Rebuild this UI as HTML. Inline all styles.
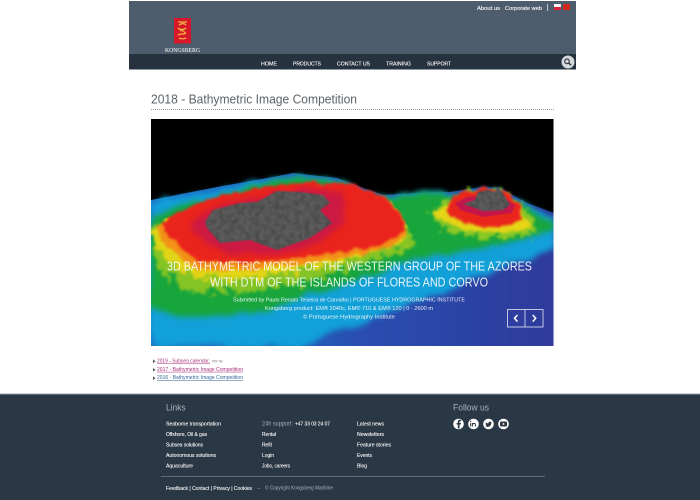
<!DOCTYPE html>
<html><head><meta charset="utf-8">
<style>
html,body{margin:0;padding:0;background:#fff;width:700px;height:500px;overflow:hidden}
svg{display:block;position:absolute;left:0;top:0}
text{font-family:"Liberation Sans",sans-serif}
</style></head><body>
<svg width="700" height="500" viewBox="0 0 700 500" xmlns="http://www.w3.org/2000/svg">
<defs>
<clipPath id="ic"><rect x="151" y="119" width="402.500" height="227"/></clipPath>
<clipPath id="yc"><polygon points="151,224 183,212 217,199 267,190 310,184 350,186 390,198 430,262 300,310 151,310"/></clipPath>
<filter id="b" x="-5%" y="-5%" width="110%" height="110%"><feGaussianBlur stdDeviation="0.35"/></filter>
<filter id="rough" x="-10%" y="-10%" width="120%" height="120%" color-interpolation-filters="sRGB">
<feTurbulence type="fractalNoise" baseFrequency="0.1" numOctaves="3" seed="4"/>
<feDisplacementMap in="SourceGraphic" scale="8" xChannelSelector="R" yChannelSelector="G"/>
<feGaussianBlur stdDeviation="1.2"/></filter>
<filter id="spk" x="-10%" y="-10%" width="120%" height="120%" color-interpolation-filters="sRGB">
<feTurbulence type="fractalNoise" baseFrequency="0.14" numOctaves="3" seed="11"/>
<feDisplacementMap in="SourceGraphic" scale="22" xChannelSelector="R" yChannelSelector="G"/>
<feGaussianBlur stdDeviation="1.3"/></filter>
<filter id="soft" x="-10%" y="-10%" width="120%" height="120%" color-interpolation-filters="sRGB">
<feTurbulence type="fractalNoise" baseFrequency="0.05" numOctaves="2" seed="9"/>
<feDisplacementMap in="SourceGraphic" scale="12" xChannelSelector="R" yChannelSelector="G"/>
<feGaussianBlur stdDeviation="3"/></filter>
<filter id="rock" x="-5%" y="-5%" width="110%" height="110%" color-interpolation-filters="sRGB">
<feTurbulence type="fractalNoise" baseFrequency="0.2" numOctaves="3" seed="3" result="n"/>
<feColorMatrix in="n" type="matrix" values="0 0 0 0 0.22 0 0 0 0 0.22 0 0 0 0 0.22 0 0 0 1.2 -0.42" result="d"/>
<feComposite in="d" in2="SourceAlpha" operator="in" result="d2"/>
<feMerge result="m"><feMergeNode in="SourceGraphic"/><feMergeNode in="d2"/></feMerge>
<feGaussianBlur in="m" stdDeviation="0.6"/></filter>
<linearGradient id="blue" x1="0" x2="1" y1="0" y2="0"><stop offset="0" stop-color="#1a78ca"/><stop offset="0.55" stop-color="#2a4cb0"/><stop offset="1" stop-color="#2e3a9a"/></linearGradient>
</defs>

<!-- header -->
<rect x="129" y="1" width="447" height="53" fill="#4e5d6d"/>
<rect x="129" y="54" width="447" height="15.500" fill="#26333f"/>
<rect x="174" y="18" width="17" height="25.500" fill="#d7182a"/>
<g fill="none" stroke="#f2b544" stroke-width="1.300" filter="url(#b)"><path d="M178 22h9M179 25c3-2 5-2 7 0M178 28c2 2 6 2 8 0M180 31c2-1 4 0 5 2M178 35c3-2 6 0 8-2M179 38c2 1 5 1 7 0"/></g>
<g filter="url(#b)">
<text x="165" y="52" font-size="6" fill="#fff" textLength="35" lengthAdjust="spacingAndGlyphs" style="font-family:'Liberation Serif',serif">KONGSBERG</text>
<g fill="#fff" stroke="#fff" stroke-width="0.100">
<text x="477" y="10" font-size="5.500" textLength="23" lengthAdjust="spacingAndGlyphs">About us</text>
<text x="505" y="10" font-size="5.500" textLength="37" lengthAdjust="spacingAndGlyphs">Corporate web</text>
<g font-size="5.500">
<text x="261" y="65.500" textLength="16" lengthAdjust="spacingAndGlyphs">HOME</text>
<text x="293" y="65.500" textLength="28" lengthAdjust="spacingAndGlyphs">PRODUCTS</text>
<text x="337" y="65.500" textLength="33" lengthAdjust="spacingAndGlyphs">CONTACT US</text>
<text x="386" y="65.500" textLength="25" lengthAdjust="spacingAndGlyphs">TRAINING</text>
<text x="427" y="65.500" textLength="24" lengthAdjust="spacingAndGlyphs">SUPPORT</text>
</g>
</g>
<rect x="547" y="4" width="0.800" height="7" fill="#dfe3e6"/>
<rect x="554" y="4" width="7" height="3" fill="#f4f4f4"/><rect x="554" y="7" width="7" height="3" fill="#d8203a"/>
<rect x="563" y="4" width="7" height="6" fill="#cf2a1c"/>
<circle cx="568" cy="62" r="6.500" fill="#d5d9dc"/>
<circle cx="567" cy="61.300" r="2.300" fill="none" stroke="#333d47" stroke-width="1.200"/>
<path d="M568.800 63l2.200 2.200" stroke="#333d47" stroke-width="1.500"/>
<text x="151" y="103.500" font-size="13" fill="#5c6369" textLength="206" lengthAdjust="spacingAndGlyphs">2018 - Bathymetric Image Competition</text>
</g>
<line x1="151" x2="554" y1="109.500" y2="109.500" stroke="#999" stroke-width="1" stroke-dasharray="1 1"/>

<!-- image -->
<g clip-path="url(#ic)">
<rect x="151" y="119" width="403" height="227" fill="#000"/>
<polygon points="151,200 217,187 273,177 293,173 337,178 363,188 383,195 417,193 450,192 483,187 500,188 527,203 554,213 554,346 151,346" fill="url(#blue)" filter="url(#b)"/>
<polygon points="151,202 217,189 273,179 293,175 337,180 363,190 383,197 417,195 450,194 483,189 500,190 527,205 554,218 554,248 483,275 417,302 350,328 300,346 151,346" fill="#12a0d8" filter="url(#soft)"/>
<polygon points="151,216 200,202 270,182 293,176 340,182 365,192 383,198 417,196 450,196 483,192 500,193 530,210 554,224 554,232 483,248 417,258 350,282 300,298 250,315 170,316 151,306" fill="#17a53c" filter="url(#soft)"/>
<g clip-path="url(#yc)">
<polygon points="151,225 170,220 200,208 250,196 300,190 350,190 394,205 408,225 418,245 350,268 300,284 250,292 190,292 160,270 151,255" fill="#84c424" filter="url(#spk)"/>
<polygon points="151,232 172,220 205,206 267,194 310,188 350,190 390,204 402,222 408,240 350,258 300,270 250,278 195,278 165,260 151,245" fill="#e2d416" filter="url(#spk)"/>
</g>
<polygon points="157,226 183,214 217,200 267,191 310,185 350,187 386,199 400,214 408,236 383,249 350,257 300,264 250,270 198,270 176,254 160,240" fill="#f39018" filter="url(#rough)"/>
<polygon points="428,214 443,202 470,190 503,192 525,207 538,232 510,238 467,236 440,226" fill="#8cc824" filter="url(#spk)"/>
<polygon points="434,214 447,204 470,192 503,194 521,208 532,228 510,232 467,231 444,222" fill="#e6d416" filter="url(#rough)"/>
<polygon points="161,222 184,209 217,196 267,187 310,182 350,184 383,195 399,212 406,230 383,243 350,251 300,258 250,263 200,262 181,247 164,234" fill="#ea241c" filter="url(#rough)"/>
<polygon points="446,205 460,192 483,188 503,191 520,205 524,219 500,228 470,224 450,216" fill="#ea261c" filter="url(#rough)"/>
<polygon points="190,222 215,208 260,198 310,188 340,192 345,210 345,225 320,243 280,255 230,254 205,245" fill="#cc1a42" filter="url(#soft)"/>
<polygon points="455,203 467,197 497,193 515,205 512,213 483,217 460,210" fill="#c41848" filter="url(#b)"/>
<polygon points="205,222 213,210 240,203 257,202 277,191 300,192 323,195 330,203 320,210 332,223 310,238 277,250 250,240 220,243 207,228" fill="#5c5c5c" filter="url(#rock)"/>
<polygon points="463,204 475,200 478,192 487,190 495,192 498,187 503,193 510,205 503,210 483,211 472,207" fill="#5c5c5c" filter="url(#rock)"/>
</g>
<g filter="url(#b)" fill="#fff">
<text x="167" y="270.500" font-size="12.500" textLength="365" lengthAdjust="spacingAndGlyphs" fill-opacity="0.9">3D BATHYMETRIC MODEL OF THE WESTERN GROUP OF THE AZORES</text>
<text x="210" y="286.500" font-size="12.500" textLength="278" lengthAdjust="spacingAndGlyphs" fill-opacity="0.9">WITH DTM OF THE ISLANDS OF FLORES AND CORVO</text>
<text x="233" y="301.500" font-size="5.800" textLength="232" lengthAdjust="spacingAndGlyphs" fill-opacity="0.9">Submitted by Paulo Renato Teixeira de Carvalho | PORTUGUESE HYDROGRAPHIC INSTITUTE</text>
<text x="265" y="310" font-size="5.800" textLength="168" lengthAdjust="spacingAndGlyphs" fill-opacity="0.9">Kongsberg product: EM® 2040c, EM® 710 &amp; EM® 120 | 0 - 2600 m</text>
<text x="303" y="318.500" font-size="5.800" textLength="92" lengthAdjust="spacingAndGlyphs" fill-opacity="0.9">© Portuguese Hydrography Institute</text>
</g>
<rect x="507.500" y="309.500" width="35.500" height="17.500" fill="none" stroke="#e6e8f4" stroke-width="0.800"/>
<line x1="525" x2="525" y1="309.500" y2="327" stroke="#e6e8f4" stroke-width="0.800"/>
<path d="M517.500 315l-3 3.300 3 3.300M532.700 315l3 3.300-3 3.300" fill="none" stroke="#fff" stroke-width="1.500"/>

<!-- list -->
<path d="M153 359.500l2.500 1.800-2.500 1.800zM153 368l2.500 1.800-2.500 1.800zM153 376.500l2.500 1.800-2.500 1.800z" fill="#555"/>
<g filter="url(#b)">
<text x="157" y="362.500" font-size="5.300" fill="#a8327c" textLength="53" lengthAdjust="spacingAndGlyphs" text-decoration="underline">2019 - Subsea calendar,</text>
<text x="212" y="362.500" font-size="3.800" fill="#777" textLength="11" lengthAdjust="spacingAndGlyphs">PDF file</text>
<text x="157" y="370.800" font-size="5.300" fill="#a8327c" textLength="86" lengthAdjust="spacingAndGlyphs" text-decoration="underline">2017 - Bathymetric Image Competition</text>
<text x="157" y="379.200" font-size="5.300" fill="#37689c" textLength="86" lengthAdjust="spacingAndGlyphs" text-decoration="underline">2016 - Bathymetric Image Competition</text>
</g>

<!-- footer -->
<rect x="0" y="394" width="700" height="106" fill="#2a3744"/>
<rect x="0" y="393.500" width="700" height="1" fill="#9aa1a8"/>
<rect x="161" y="476" width="384" height="1" fill="#5f6d7a"/>
<g filter="url(#b)" fill="#fff" font-size="5.300">
<text x="166" y="410.500" font-size="9" fill="#aab3bb" textLength="19.500" lengthAdjust="spacingAndGlyphs">Links</text>
<g stroke="#fff" stroke-width="0.080">
<text x="166" y="425.300" textLength="55" lengthAdjust="spacingAndGlyphs">Seaborne transportation</text>
<text x="166" y="435.800" textLength="41" lengthAdjust="spacingAndGlyphs">Offshore, Oil &amp; gas</text>
<text x="166" y="446.300" textLength="37" lengthAdjust="spacingAndGlyphs">Subsea solutions</text>
<text x="166" y="457" textLength="50" lengthAdjust="spacingAndGlyphs">Autonomous solutions</text>
<text x="166" y="467.500" textLength="27" lengthAdjust="spacingAndGlyphs">Aquaculture</text>
<text x="295" y="425.300" textLength="35" lengthAdjust="spacingAndGlyphs">+47 33 03 24 07</text>
<text x="262" y="435.800" textLength="14" lengthAdjust="spacingAndGlyphs">Rental</text>
<text x="262" y="446.300" textLength="10" lengthAdjust="spacingAndGlyphs">Refit</text>
<text x="262" y="457" textLength="12" lengthAdjust="spacingAndGlyphs">Login</text>
<text x="262" y="467.500" textLength="28" lengthAdjust="spacingAndGlyphs">Jobs, careers</text>
<text x="357" y="425.300" textLength="27" lengthAdjust="spacingAndGlyphs">Latest news</text>
<text x="357" y="435.800" textLength="27" lengthAdjust="spacingAndGlyphs">Newsletters</text>
<text x="357" y="446.300" textLength="34" lengthAdjust="spacingAndGlyphs">Feature stories</text>
<text x="357" y="457" textLength="15" lengthAdjust="spacingAndGlyphs">Events</text>
<text x="357" y="467.500" textLength="10" lengthAdjust="spacingAndGlyphs">Blog</text>
<text x="166" y="490" textLength="86" lengthAdjust="spacingAndGlyphs">Feedback | Contact | Privacy | Cookies</text>
</g>
<text x="262" y="425.300" font-size="6" fill="#a6aeb6" textLength="31" lengthAdjust="spacingAndGlyphs">24h support:</text>
<text x="453" y="410.500" font-size="9" fill="#aab3bb" textLength="36" lengthAdjust="spacingAndGlyphs">Follow us</text>
<text x="257" y="489.500" fill="#8c96a0" textLength="3.500" lengthAdjust="spacingAndGlyphs">—</text>
<text x="265" y="489.500" fill="#aab2ba" textLength="68" lengthAdjust="spacingAndGlyphs">© Copyright Kongsberg Maritime</text>
</g>
<g filter="url(#b)">
<circle cx="458.500" cy="424" r="5.300" fill="#fff"/><circle cx="473.500" cy="424" r="5.300" fill="#fff"/><circle cx="488.500" cy="424" r="5.300" fill="#fff"/><circle cx="503.500" cy="424" r="5.300" fill="#fff"/>
<path d="M459.500 428.500v-4h1.300l.2-1.500h-1.500v-1c0-.5.2-.8.8-.8h.8v-1.400h-1.200c-1.500 0-2.100.9-2.100 2.100V423h-1.200v1.500h1.200v4z" fill="#2a3744"/>
<path d="M470.700 423v3.500M472.400 426.500V423M472.400 424.500c.5-1.500 3-1.700 3 .3v1.700" fill="none" stroke="#2a3744" stroke-width="1"/><circle cx="470.700" cy="421.400" r=".7" fill="#2a3744"/>
<path d="M485.500 426.500c2.800 1.300 5.800-.4 5.800-3.500l.7-.8-.9.200c-.7-1.300-2.900-.8-2.600 1-1.100 0-2-.5-2.600-1.300-.4.800-.2 1.700.4 2.200l-.7-.1c0 .7.500 1.300 1.200 1.500l-.7.100c.2.500.6.800 1.200.9-.5.300-1.100.4-1.800.3z" fill="#2a3744"/>
<rect x="500" y="421.500" width="7" height="5" rx="1.200" fill="#2a3744"/><path d="M502.800 422.800v2.400l2-1.200z" fill="#fff"/>
</g>
</svg>
</body></html>
